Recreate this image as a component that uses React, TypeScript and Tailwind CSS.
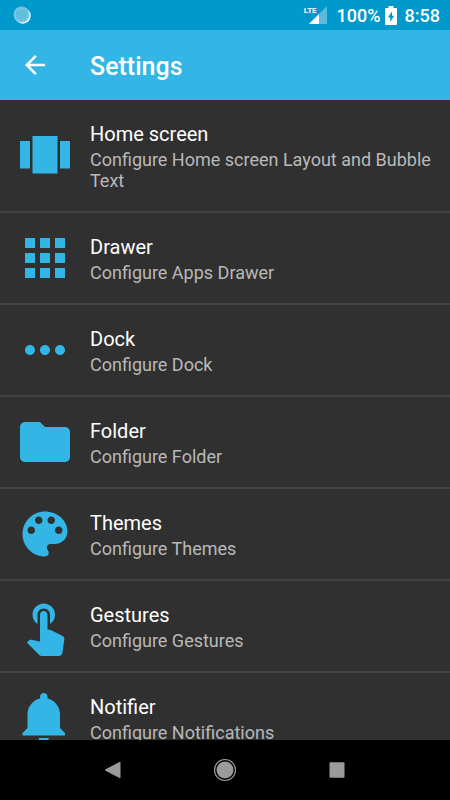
import type { ReactNode } from 'react';

type SettingsItem = {
  title: string;
  summary: string;
  icon: ReactNode;
};

const items: SettingsItem[] = [
  {
    title: 'Home screen',
    summary: 'Configure Home screen Layout and Bubble Text',
    icon: <path d="M7 19h10V4H7v15zm-5-2h4V6H2v11zM18 6v11h4V6h-4z" />,
  },
  {
    title: 'Drawer',
    summary: 'Configure Apps Drawer',
    icon: (
      <path d="M4 8h4V4H4v4zm6 12h4v-4h-4v4zm-6 0h4v-4H4v4zm0-6h4v-4H4v4zm6 0h4v-4h-4v4zm6-10v4h4V4h-4zm-6 4h4V4h-4v4zm6 6h4v-4h-4v4zm0 6h4v-4h-4v4z" />
    ),
  },
  {
    title: 'Dock',
    summary: 'Configure Dock',
    icon: (
      <path d="M6 10c-1.1 0-2 .9-2 2s.9 2 2 2 2-.9 2-2-.9-2-2-2zm12 0c-1.1 0-2 .9-2 2s.9 2 2 2 2-.9 2-2-.9-2-2-2zm-6 0c-1.1 0-2 .9-2 2s.9 2 2 2 2-.9 2-2-.9-2-2-2z" />
    ),
  },
  {
    title: 'Folder',
    summary: 'Configure Folder',
    icon: (
      <path d="M10 4H4c-1.1 0-1.99.9-1.99 2L2 18c0 1.1.9 2 2 2h16c1.1 0 2-.9 2-2V8c0-1.1-.9-2-2-2h-8l-2-2z" />
    ),
  },
  {
    title: 'Themes',
    summary: 'Configure Themes',
    icon: (
      <path d="M12 3c-4.97 0-9 4.03-9 9s4.03 9 9 9c.83 0 1.5-.67 1.5-1.5 0-.39-.15-.74-.39-1.01-.23-.26-.38-.61-.38-.99 0-.83.67-1.5 1.5-1.5H16c2.76 0 5-2.24 5-5 0-4.42-4.03-8-9-8zm-5.5 9c-.83 0-1.5-.67-1.5-1.5S5.67 9 6.5 9 8 9.67 8 10.5 7.33 12 6.5 12zm3-4C8.67 8 8 7.33 8 6.5S8.67 5 9.5 5s1.5.67 1.5 1.5S10.33 8 9.5 8zm5 0c-.83 0-1.5-.67-1.5-1.5S13.67 5 14.5 5s1.5.67 1.5 1.5S15.33 8 14.5 8zm3 4c-.83 0-1.5-.67-1.5-1.5S16.67 9 17.5 9s1.5.67 1.5 1.5-.67 1.5-1.5 1.5z" />
    ),
  },
  {
    title: 'Gestures',
    summary: 'Configure Gestures',
    icon: (
      <path d="M9 11.24V7.5C9 6.12 10.12 5 11.5 5S14 6.12 14 7.5v3.74c1.21-.81 2-2.18 2-3.74C16 5.01 13.99 3 11.5 3S7 5.01 7 7.5c0 1.56.79 2.93 2 3.74zm9.84 4.63l-4.54-2.26c-.17-.07-.35-.11-.54-.11H13v-6c0-.83-.67-1.5-1.5-1.5S10 6.67 10 7.5v10.74l-3.43-.72c-.08-.01-.15-.03-.24-.03-.31 0-.59.13-.79.33l-.79.8 4.94 4.94c.27.27.65.44 1.06.44h6.79c.75 0 1.33-.55 1.44-1.28l.75-5.27c.01-.07.02-.14.02-.2 0-.62-.38-1.16-.91-1.38z" />
    ),
  },
  {
    title: 'Notifier',
    summary: 'Configure Notifications',
    icon: (
      <path d="M11.5 22c1.1 0 2-.9 2-2h-4c0 1.1.9 2 2 2zm6.5-6v-5.5c0-3.07-2.13-5.64-5-6.32V3.5c0-.83-.67-1.5-1.5-1.5S10 2.67 10 3.5v.68c-2.87.68-5 3.25-5 6.32V16l-2 2v1h17v-1l-2-2z" />
    ),
  },
];

function StatusBar() {
  return (
    <div className="flex h-[30px] shrink-0 items-center justify-between bg-[#0099cc] pr-[10px] pl-[13px] text-lg font-medium text-white">
      <svg viewBox="0 0 18 18" className="size-[18px]" aria-hidden>
        <circle cx="9.7" cy="9.7" r="8" fill="#fff" />
        <circle cx="8.5" cy="8.5" r="8" fill="#62bfe0" />
        <circle
          cx="8.5"
          cy="8.5"
          r="6.7"
          fill="none"
          stroke="#92d2ea"
          strokeWidth="2"
          strokeDasharray="0.9 1.2"
        />
      </svg>
      <div className="flex items-center">
        <div className="flex">
          <span className="text-[8px] leading-[9px] font-bold">LTE</span>
          <svg viewBox="0 0 18 18" className="-ml-2 size-[18px]" aria-hidden>
            <path d="M0 18L18 0v18z" fill="#fff" fillOpacity=".35" />
            <path d="M0 18L10 8v10z" fill="#fff" />
          </svg>
        </div>
        <span className="ml-[10px] pt-px">100%</span>
        <svg viewBox="0 0 12 19" className="mr-2 ml-1 h-[19px] w-3" aria-hidden>
          <path
            fill="#fff"
            fillRule="evenodd"
            d="M3.5 0h5v2H11a1 1 0 0 1 1 1v15a1 1 0 0 1-1 1H1a1 1 0 0 1-1-1V3a1 1 0 0 1 1-1h2.5zM7 5.500L2.800 11.500H5.200V16L9.300 9.700H7z"
          />
        </svg>
        <span className="pt-px">8:58</span>
      </div>
    </div>
  );
}

function NavBar() {
  return (
    <nav className="flex h-[60px] shrink-0 items-center justify-center gap-22 bg-black text-[#9b9b9b]">
      <button type="button" aria-label="Back">
        <svg viewBox="0 0 24 24" className="size-6" fill="currentColor">
          <path d="M4.500 11.300L18.500 4q1-.4 1 .6v14.800q0 1-1 .6L4.500 12.700q-1-.7 0-1.400z" />
        </svg>
      </button>
      <button type="button" aria-label="Home">
        <svg viewBox="0 0 24 24" className="size-6">
          <circle cx="12" cy="12" r="8.500" fill="currentColor" />
          <circle
            cx="12"
            cy="12"
            r="10.500"
            fill="none"
            stroke="currentColor"
            strokeWidth="1.200"
          />
        </svg>
      </button>
      <button type="button" aria-label="Recent apps">
        <svg viewBox="0 0 24 24" className="size-6" fill="currentColor">
          <rect x="4.500" y="4.200" width="15" height="15.600" rx="1" />
        </svg>
      </button>
    </nav>
  );
}

export default function App() {
  return (
    <div className="flex h-screen flex-col bg-[#303030] font-['Roboto',sans-serif]">
      <StatusBar />

      <header className="flex h-[70px] shrink-0 items-center bg-[#33b5e5] pl-5 text-white">
        <button type="button" aria-label="Navigate up">
          <svg viewBox="0 0 24 24" className="size-[30px]" fill="currentColor">
            <path d="M20 11H7.830l5.590-5.590L12 4l-8 8 8 8 1.410-1.410L7.830 13H20v-2z" />
          </svg>
        </button>
        <h1 className="ml-10 pt-1 text-[25px] font-medium">Settings</h1>
      </header>

      <main className="min-h-0 flex-1 overflow-y-auto [scrollbar-width:none]">
        <ul>
          {items.map((item) => (
            <li key={item.title}>
              <button
                type="button"
                className="flex w-full items-center gap-[15px] border-b-2 border-[#424242] px-[15px] text-left"
              >
                <svg
                  viewBox="0 0 24 24"
                  className="size-[60px] shrink-0 text-[#33b5e5]"
                  fill="currentColor"
                  aria-hidden
                >
                  {item.icon}
                </svg>
                <span className="flex flex-col gap-[3px] pt-[22px] pb-5">
                  <span className="text-xl leading-6 text-white">
                    {item.title}
                  </span>
                  <span className="text-lg leading-[21px] text-[#b9b9b9]">
                    {item.summary}
                  </span>
                </span>
              </button>
            </li>
          ))}
        </ul>
      </main>

      <NavBar />
    </div>
  );
}
